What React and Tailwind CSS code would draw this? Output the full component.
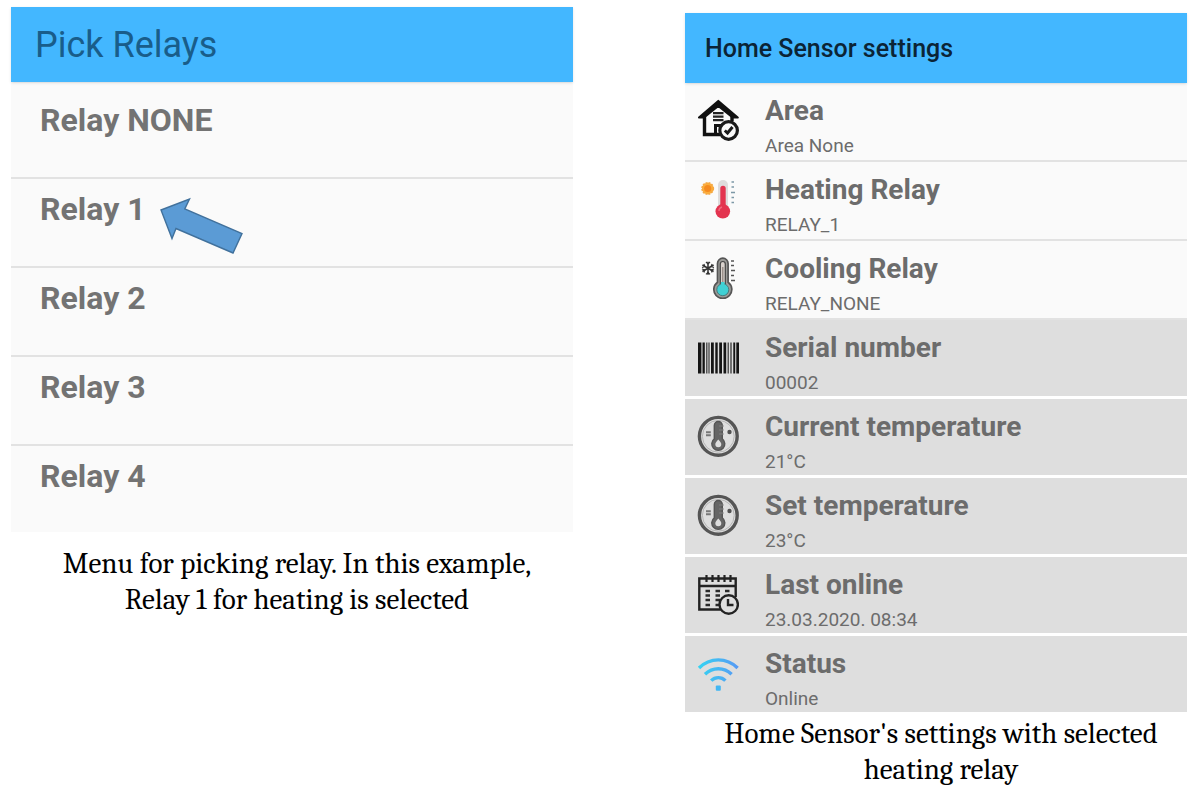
import React from "react";

const relays = ["Relay NONE", "Relay 1", "Relay 2", "Relay 3", "Relay 4"];

function Svg({ children }) {
  return (
    <svg viewBox="0 0 42 42" className="size-[42px] shrink-0" fill="none" aria-hidden="true">
      {children}
    </svg>
  );
}

function HouseIcon() {
  return (
    <Svg>
      <path d="M7.500 16v19.500H23M35 16v6" stroke="#111" strokeWidth="3.400" />
      <path d="M2 18.500 21.300 2 40.700 18.500h-5L21.300 7 7 18.500Z" stroke="#111" strokeWidth="2.200" strokeLinejoin="round" fill="#111" />
      <path d="M16 14.200h10.500M16 17.700h10.500M16 21.200h10.500" stroke="#222" strokeWidth="2.200" />
      <path d="M18.500 35.500V26.500h5.500" stroke="#111" strokeWidth="3" />
      <circle cx="31.600" cy="31.500" r="8.800" fill="#fafafa" stroke="#1a1a1a" strokeWidth="3.200" />
      <path d="m27.800 31.500 2.700 2.500 5-6" stroke="#1a1a1a" strokeWidth="3" />
    </Svg>
  );
}

function HeatIcon() {
  return (
    <Svg>
      <circle cx="10.700" cy="10.500" r="5.700" fill="#fbae3c" stroke="#f5a742" strokeWidth="1.500" strokeDasharray="2 1" />
      <circle cx="10.700" cy="10.500" r="3.600" fill="#f58a1f" />
      <path d="M21 7a5 5 0 0 1 10 0v21H21Z" fill="#dedcdc" />
      <path d="M23.300 10.500a2.700 2.700 0 0 1 5.400 0V30h-5.400Z" fill="#e3344f" />
      <circle cx="25.800" cy="33.300" r="7.300" fill="#e3344f" />
      <path d="M22 33a4 4 0 0 1 3-4" stroke="#f0687b" strokeWidth="1.500" />
      <path d="M34.500 4h2.500M34.500 9h2.500M34 14.500h4M34.500 19.500h2.500M34.500 24.500h2.500" stroke="#7c98a6" strokeWidth="1.600" />
    </Svg>
  );
}

function CoolIcon() {
  return (
    <Svg>
      <g stroke="#333" strokeWidth="1.500">
        <path d="M11 4.700v13M5.400 8l11.200 6.500M16.600 8 5.400 14.500" />
        <path d="m9 5 2 2 2-2M9 17.400l2-2 2 2M5 10.500l2.600-.8L7 7M17 10.500l-2.600-.8L15 7M5 12l2.600.8L7 15.500M17 12l-2.600.8.6 2.700" strokeWidth="1.200" />
      </g>
      <path d="M20.500 6.500a5.300 5.300 0 0 1 10.600 0v18.700a9 9 0 1 1-10.600 0Z" fill="#9b9b98" stroke="#555" strokeWidth="1.700" />
      <path d="M23.300 7a2.500 2.500 0 0 1 5 0v20h-5Z" fill="#d9d2cd" stroke="#444" strokeWidth="1.200" />
      <circle cx="25.800" cy="32.700" r="6" fill="#3fd0d4" stroke="#477b7d" strokeWidth="1" />
      <path d="M25.800 10v19" stroke="#8b807a" strokeWidth="1.200" />
      <path d="M24 25h3.600v4H24Z" fill="#3fd0d4" />
      <path d="M34 4h3M34 8.500h3M34 13.500h4M34 18.500h3M34 23.500h4" stroke="#555" strokeWidth="1.500" />
    </Svg>
  );
}

function BarcodeIcon() {
  return (
    <Svg>
      <path d="M1 6.500h3.400v31H1zM5.500 6.500h2.300v31H5.500zM14 6.500h2.800v31H14zM18.300 6.500h2.400v31h-2.400zM22.200 6.500H25v31h-2.800zM26.500 6.500h2.700v31h-2.700zM36.300 6.500h1.900v31h-1.900zM39.300 6.500H42v31h-2.700z" fill="#151515" />
      <path d="M9 6.500h1.500v31H9zM11.300 6.500h1.400v31h-1.400zM30.500 6.500H32v31h-1.500zM33.200 6.500h1.600v31h-1.600z" fill="#555" />
    </Svg>
  );
}

function DialIcon() {
  return (
    <Svg>
      <circle cx="21.300" cy="21.300" r="18.900" stroke="#555" strokeWidth="3.400" />
      <circle cx="21.300" cy="21.300" r="15.900" stroke="#b5b5b5" strokeWidth="1" />
      <path d="M17.300 10.500a4 4 0 0 1 8 0v13.300a6.500 6.500 0 1 1-8 0Z" fill="#666" stroke="#555" strokeWidth="1.400" />
      <path d="M21.300 24.500c-2 2.300-3 3.300-3 4.800a3 3 0 0 0 6 0c0-1.500-1-2.500-3-4.800Z" fill="#dedede" />
      <path d="M22 11h4.500M22 15h4.500M22 19h4.500" stroke="#777" strokeWidth="1.500" />
      <path d="M9 17.200h4.800M9 20.200h4.800" stroke="#777" strokeWidth="2" />
      <circle cx="32.500" cy="17" r="2.200" fill="#505050" />
    </Svg>
  );
}

function CalendarIcon() {
  return (
    <Svg>
      <path d="M24 36.500H2.300V5.500h36.400V24M2 13h36.500" stroke="#222" strokeWidth="2.400" />
      <path d="M9.500 2v7M15.500 2v7M21.500 2v7M27.500 2v7M33.500 2v7" stroke="#222" strokeWidth="2.200" />
      <path d="M8.500 18H13M18.500 18H23M28 18h4.500M8.500 22.500H13M18.500 22.500H23M8.500 27H13M18.500 27H23M8.500 32H13M18.500 32H22" stroke="#2a2a2a" strokeWidth="2.600" />
      <circle cx="31.700" cy="31.500" r="9.200" fill="#dedede" stroke="#222" strokeWidth="2.400" />
      <path d="M31 26v6h5.500" stroke="#222" strokeWidth="2.400" />
    </Svg>
  );
}

function WifiIcon() {
  return (
    <Svg>
      <defs>
        <linearGradient id="wifi" gradientUnits="userSpaceOnUse" x1="1" y1="20" x2="41" y2="20">
          <stop offset="0" stopColor="#35d4f2" />
          <stop offset="1" stopColor="#5799f4" />
        </linearGradient>
      </defs>
      <g stroke="url(#wifi)" strokeWidth="3.400">
        <path d="M2 16c11-10.800 27.600-10.800 38.600 0M8 22.300c7.600-7.400 19-7.400 26.600 0M14.200 28.600c4-4 10.200-4 14.200 0" />
      </g>
      <rect x="18.800" y="33.500" width="5" height="5.200" rx="1" fill="#43b7f3" />
    </Svg>
  );
}

const settings = [
  { Icon: HouseIcon, title: "Area", value: "Area None", editable: true },
  { Icon: HeatIcon, title: "Heating Relay", value: "RELAY_1", editable: true },
  { Icon: CoolIcon, title: "Cooling Relay", value: "RELAY_NONE", editable: true },
  { Icon: BarcodeIcon, title: "Serial number", value: "00002" },
  { Icon: DialIcon, title: "Current temperature", value: "21°C" },
  { Icon: DialIcon, title: "Set temperature", value: "23°C" },
  { Icon: CalendarIcon, title: "Last online", value: "23.03.2020. 08:34" },
  { Icon: WifiIcon, title: "Status", value: "Online" },
];

function SettingContent({ Icon, title, value }) {
  return (
    <>
      <span className="pt-4">
        <Icon />
      </span>
      <span className="flex flex-col gap-[7px] pt-3">
        <span className="text-[28px] leading-8 font-bold text-[#6c6c6c]">{title}</span>
        <span className="text-[19px] leading-6 text-[#6c6c6c]">{value}</span>
      </span>
    </>
  );
}

function PointerArrow() {
  return (
    <svg viewBox="0 0 88 60" className="pointer-events-none absolute top-4 left-[147px] w-[88px]" aria-hidden="true">
      <path d="M3 15 31.500 4l-4.700 10L84 38.500 75 58 18 33.500 14 43.500Z" fill="#5b9bd5" stroke="#41719c" strokeWidth="1.400" />
    </svg>
  );
}

function Caption({ children, className }) {
  return (
    <figcaption
      className={"pl-[10px] text-center font-['Cambria','Caladea','Liberation_Serif',serif] text-[29px] leading-9 text-black " + className}
    >
      {children}
    </figcaption>
  );
}

export default function App() {
  return (
    <main className="grid grid-cols-[562fr_502fr] items-start gap-28 bg-white pr-[7px] pl-[11px] font-['Roboto',sans-serif]">
      <figure className="pt-[7px]">
        <div className="bg-[#fafafa]">
          <header className="flex h-[75px] items-center bg-[#43b7ff] pl-6 shadow-sm">
            <h1 className="text-4xl text-[#195d8a]">Pick Relays</h1>
          </header>
          <ul className="pt-2">
            {relays.map((name) => (
              <li key={name} className="group relative">
                <button
                  type="button"
                  className="flex h-[89px] w-full items-start border-b-2 border-[#e2e2e2] pt-[10px] pl-[29px] text-left text-[32px] leading-10 font-bold text-[#737373] group-last:h-[86px] group-last:border-b-0"
                >
                  {name}
                </button>
                {name === "Relay 1" && <PointerArrow />}
              </li>
            ))}
          </ul>
        </div>
        <Caption className="mt-[14px]">
          Menu for picking relay. In this example,
          <br />
          Relay 1 for heating is selected
        </Caption>
      </figure>

      <figure className="pt-[13px]">
        <div className="bg-[#fafafa]">
          <header className="flex h-[70px] items-center bg-[#43b7ff] pt-[2px] pl-5 shadow-sm">
            <h2 className="text-[25px] font-medium text-[#0b2436]">Home Sensor settings</h2>
          </header>
          <ul>
            {settings.map(({ editable, ...item }) => (
              <li key={item.title} className="group">
                {editable ? (
                  <button type="button" className="flex h-[79px] w-full items-start gap-[26px] border-b-2 border-[#e2e2e2] pl-3 text-left">
                    <SettingContent {...item} />
                  </button>
                ) : (
                  <div className="flex h-[79px] items-start gap-[26px] border-b-3 border-white bg-[#dedede] pl-3 group-last:h-[76px] group-last:border-b-0">
                    <SettingContent {...item} />
                  </div>
                )}
              </li>
            ))}
          </ul>
        </div>
        <Caption className="mt-1">
          Home Sensor's settings with selected
          <br />
          heating relay
        </Caption>
      </figure>
    </main>
  );
}
